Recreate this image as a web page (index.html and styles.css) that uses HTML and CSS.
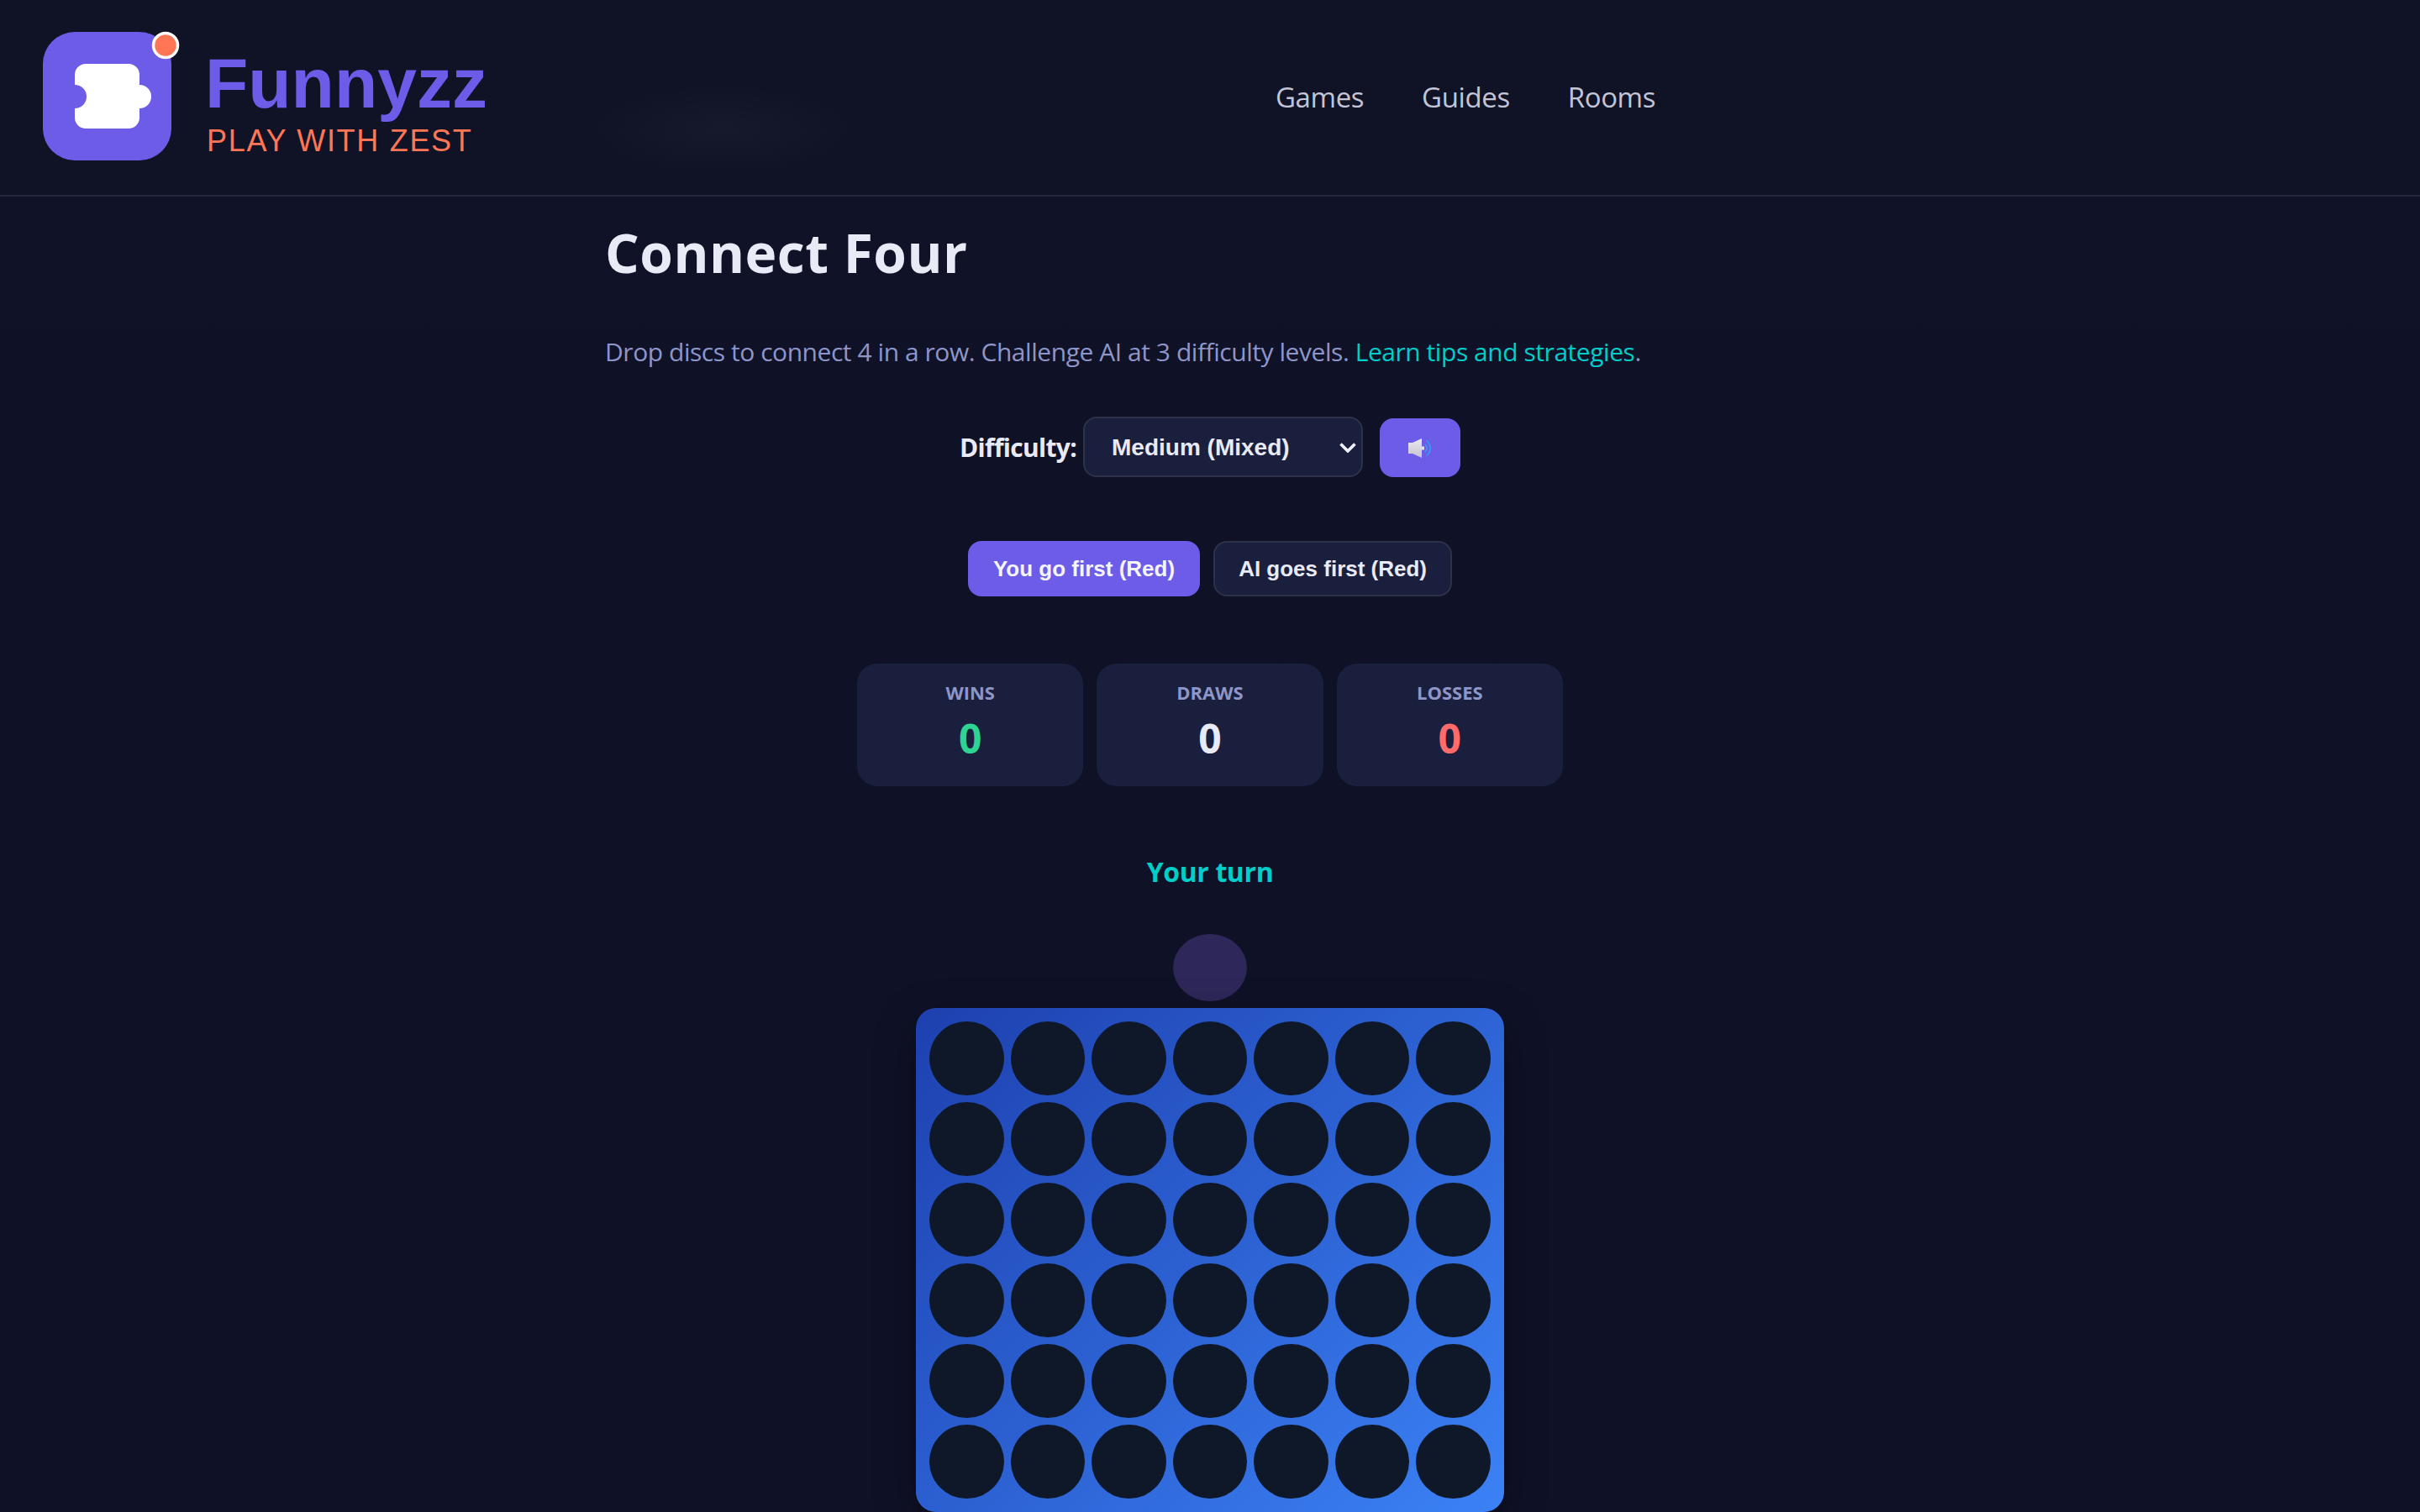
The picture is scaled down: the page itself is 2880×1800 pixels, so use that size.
FILE: index.html
```html
<!DOCTYPE html>
<html lang="en">
<head>
<meta charset="utf-8">
<title>Connect Four - Funnyzz</title>
<link rel="stylesheet" href="styles.css">
</head>
<body>
<header class="site-header">
  <a class="logo" href="#">
    <svg class="logo-mark" viewBox="0 0 170 170" width="170" height="170" aria-hidden="true">
      <rect x="0" y="16" width="153" height="153" rx="38" fill="#6c5ce7"/>
      <path d="M51 54H102a13 13 0 0 1 13 13V79a14 14 0 0 1 0 28V118a13 13 0 0 1-13 13H51a13 13 0 0 1-13-13V107a14 14 0 0 0 0-28V67a13 13 0 0 1 13-13z" fill="#fff"/>
      <circle cx="146" cy="32" r="14.5" fill="#ff7657" stroke="#fff" stroke-width="3.5"/>
    </svg>
    <span class="logo-text">
      <span class="logo-name">Funnyzz</span>
      <span class="logo-tag">PLAY WITH ZEST</span>
    </span>
  </a>
  <div class="header-glow"></div>
  <nav class="site-nav">
    <a href="#">Games</a>
    <a href="#">Guides</a>
    <a href="#">Rooms</a>
  </nav>
</header>
<main class="page">
  <h1 class="title">Connect Four</h1>
  <p class="intro">Drop discs to connect 4 in a row. Challenge AI at 3 difficulty levels. <a href="#">Learn tips and strategies</a>.</p>
  <div class="controls">
    <label class="diff-label" for="diff">Difficulty:</label>
    <div class="select-wrap">
      <select class="diff-select" id="diff">
        <option>Easy (Random)</option>
        <option selected>Medium (Mixed)</option>
        <option>Hard (Minimax)</option>
      </select>
      <svg class="select-arrow" viewBox="0 0 20 12" width="20" height="12" aria-hidden="true">
        <path d="M1.5 1.5L10 10L18.5 1.5" fill="none" stroke="#eef0fb" stroke-width="3.6"/>
      </svg>
    </div>
    <button class="sound-btn" type="button" aria-label="Sound">
      <svg viewBox="0 0 28 23" width="28" height="23" aria-hidden="true">
        <defs>
          <linearGradient id="spk" x1="0" y1="0" x2="0" y2="1">
            <stop offset="0" stop-color="#ebe9f0"/>
            <stop offset="1" stop-color="#c6c2d0"/>
          </linearGradient>
        </defs>
        <path d="M0 5H5L16 0V23L5 18H0z" fill="url(#spk)"/>
        <rect x="16" y="9.5" width="3" height="4" fill="#e3e1ea"/>
        <path d="M20 7a6 6 0 0 1 0 9" fill="none" stroke="#2ba6f2" stroke-width="1.5"/>
        <path d="M21.5 2.5a11 11 0 0 1 0 18" fill="none" stroke="#2ba6f2" stroke-width="1.5"/>
      </svg>
    </button>
  </div>
  <div class="first-row">
    <button class="pick pick-on" type="button">You go first (Red)</button>
    <button class="pick" type="button">AI goes first (Red)</button>
  </div>
  <div class="stats">
    <div class="stat"><div class="stat-label">WINS</div><div class="stat-value win">0</div></div>
    <div class="stat"><div class="stat-label">DRAWS</div><div class="stat-value">0</div></div>
    <div class="stat"><div class="stat-label">LOSSES</div><div class="stat-value loss">0</div></div>
  </div>
  <div class="turn">Your turn</div>
  <div class="preview"><div class="ghost"></div></div>
  <div class="board">
    <div class="hole"></div><div class="hole"></div><div class="hole"></div><div class="hole"></div><div class="hole"></div><div class="hole"></div><div class="hole"></div>
    <div class="hole"></div><div class="hole"></div><div class="hole"></div><div class="hole"></div><div class="hole"></div><div class="hole"></div><div class="hole"></div>
    <div class="hole"></div><div class="hole"></div><div class="hole"></div><div class="hole"></div><div class="hole"></div><div class="hole"></div><div class="hole"></div>
    <div class="hole"></div><div class="hole"></div><div class="hole"></div><div class="hole"></div><div class="hole"></div><div class="hole"></div><div class="hole"></div>
    <div class="hole"></div><div class="hole"></div><div class="hole"></div><div class="hole"></div><div class="hole"></div><div class="hole"></div><div class="hole"></div>
    <div class="hole"></div><div class="hole"></div><div class="hole"></div><div class="hole"></div><div class="hole"></div><div class="hole"></div><div class="hole"></div>
  </div>
</main>
</body>
</html>
```
FILE: styles.css
```css
* { box-sizing: border-box; }
html, body { margin: 0; height: 1800px; overflow: hidden; }
body {
  background: linear-gradient(#101328, #0f1127 800px);
  color: #e8eaf6;
  font-family: "Open Sans", "Noto Sans", sans-serif;
}
a { text-decoration: none; }

.site-header {
  position: relative;
  height: 234px;
  display: flex;
  align-items: flex-start;
  background: #101326;
  border-bottom: 2px solid #24273a;
  padding: 22px 0 0 51px;
}
.header-glow {
  position: absolute;
  left: 700px; top: 100px;
  width: 320px; height: 108px;
  background: radial-gradient(closest-side, rgba(255, 255, 255, .028), rgba(255, 255, 255, 0));
}
.logo { display: flex; align-items: flex-start; }
.logo-mark { display: block; flex: none; }
.logo-text { display: flex; flex-direction: column; margin: 29px 0 0 23px; font-family: "Liberation Sans", Arial, sans-serif; }
.logo-name { font-size: 84px; font-weight: 700; line-height: 96px; color: #6c5ce7; }
.logo-tag { font-size: 36px; line-height: 36px; letter-spacing: 1.7px; color: #ff7657; margin: 3px 0 0 2px; }
.site-nav { display: flex; gap: 69px; margin: 70px 0 0 938px; }
.site-nav a { font-size: 33px; line-height: 48px; letter-spacing: -.4px; color: #c3c5d6; }

.page { width: 1440px; margin: 0 auto; display: flex; flex-direction: column; align-items: center; }
.title { align-self: flex-start; margin: 31px 0 0; font-size: 64px; line-height: 72px; font-weight: 700; letter-spacing: .5px; color: #e8eaf6; }
.intro { align-self: flex-start; margin: 56px 0 0; font-size: 30px; line-height: 52px; letter-spacing: -.45px; color: #8e96c8; }
.intro a { color: #00cec9; }

.controls { display: flex; align-items: center; margin-top: 51px; height: 72px; }
.diff-label { font-size: 30px; font-weight: 700; letter-spacing: -.7px; color: #e8eaf6; margin-right: 8px; }
.select-wrap { position: relative; width: 333px; height: 72px; }
.diff-select {
  appearance: none;
  display: block;
  width: 100%; height: 100%;
  padding: 0 32px;
  background: #1a1f3d;
  color: #e8eaf6;
  border: 2px solid #2e3148;
  border-radius: 16px;
  font: 700 28px "Liberation Sans", Arial, sans-serif;
}
.select-arrow { position: absolute; right: 8px; top: 31px; }
.sound-btn {
  width: 96px; height: 70px;
  margin: 2px 0 0 20px;
  display: flex; align-items: center; justify-content: center;
  background: #6c5ce7;
  border: 0;
  border-radius: 16px;
  padding: 0;
}
.first-row { display: flex; gap: 16px; margin-top: 76px; }
.pick {
  height: 66px;
  padding: 0 28px;
  background: #1a1f3d;
  color: #e8eaf6;
  border: 2px solid #2e3148;
  border-radius: 16px;
  font: 700 26px "Liberation Sans", Arial, sans-serif;
}
.pick-on { background: #6c5ce7; border-color: #6c5ce7; color: #f4f4fc; }

.stats { display: flex; gap: 16px; width: 840px; margin-top: 80px; }
.stat {
  flex: 1;
  height: 146px;
  padding-top: 18px;
  background: #1a1f3d;
  border-radius: 24px;
  text-align: center;
}
.stat-label { font-size: 22px; line-height: 32px; font-weight: 700; color: #8e96c8; }
.stat-value { font-size: 48px; line-height: 64px; font-weight: 700; color: #e8eaf6; margin-top: 7px; }
.win { color: #2ed493; }
.loss { color: #ff6b6b; }

.turn { margin-top: 78px; font-size: 32px; line-height: 48px; font-weight: 700; letter-spacing: -.4px; color: #00cec9; }

.preview { width: 700px; display: flex; justify-content: center; margin-top: 50px; }
.ghost { width: 88px; height: 80px; border-radius: 50%; background: #2d2859; }

.board {
  width: 700px; height: 600px;
  margin-top: 8px;
  padding: 16px;
  display: grid;
  grid-template-columns: repeat(7, 1fr);
  grid-template-rows: repeat(6, 88px);
  gap: 8px;
  border-radius: 24px;
  background: linear-gradient(135deg, #1e40af, #3b82f6);
  box-shadow: 0 16px 48px rgba(0, 0, 0, .4);
}
.hole { border-radius: 50%; background: #0f1829; }
```
